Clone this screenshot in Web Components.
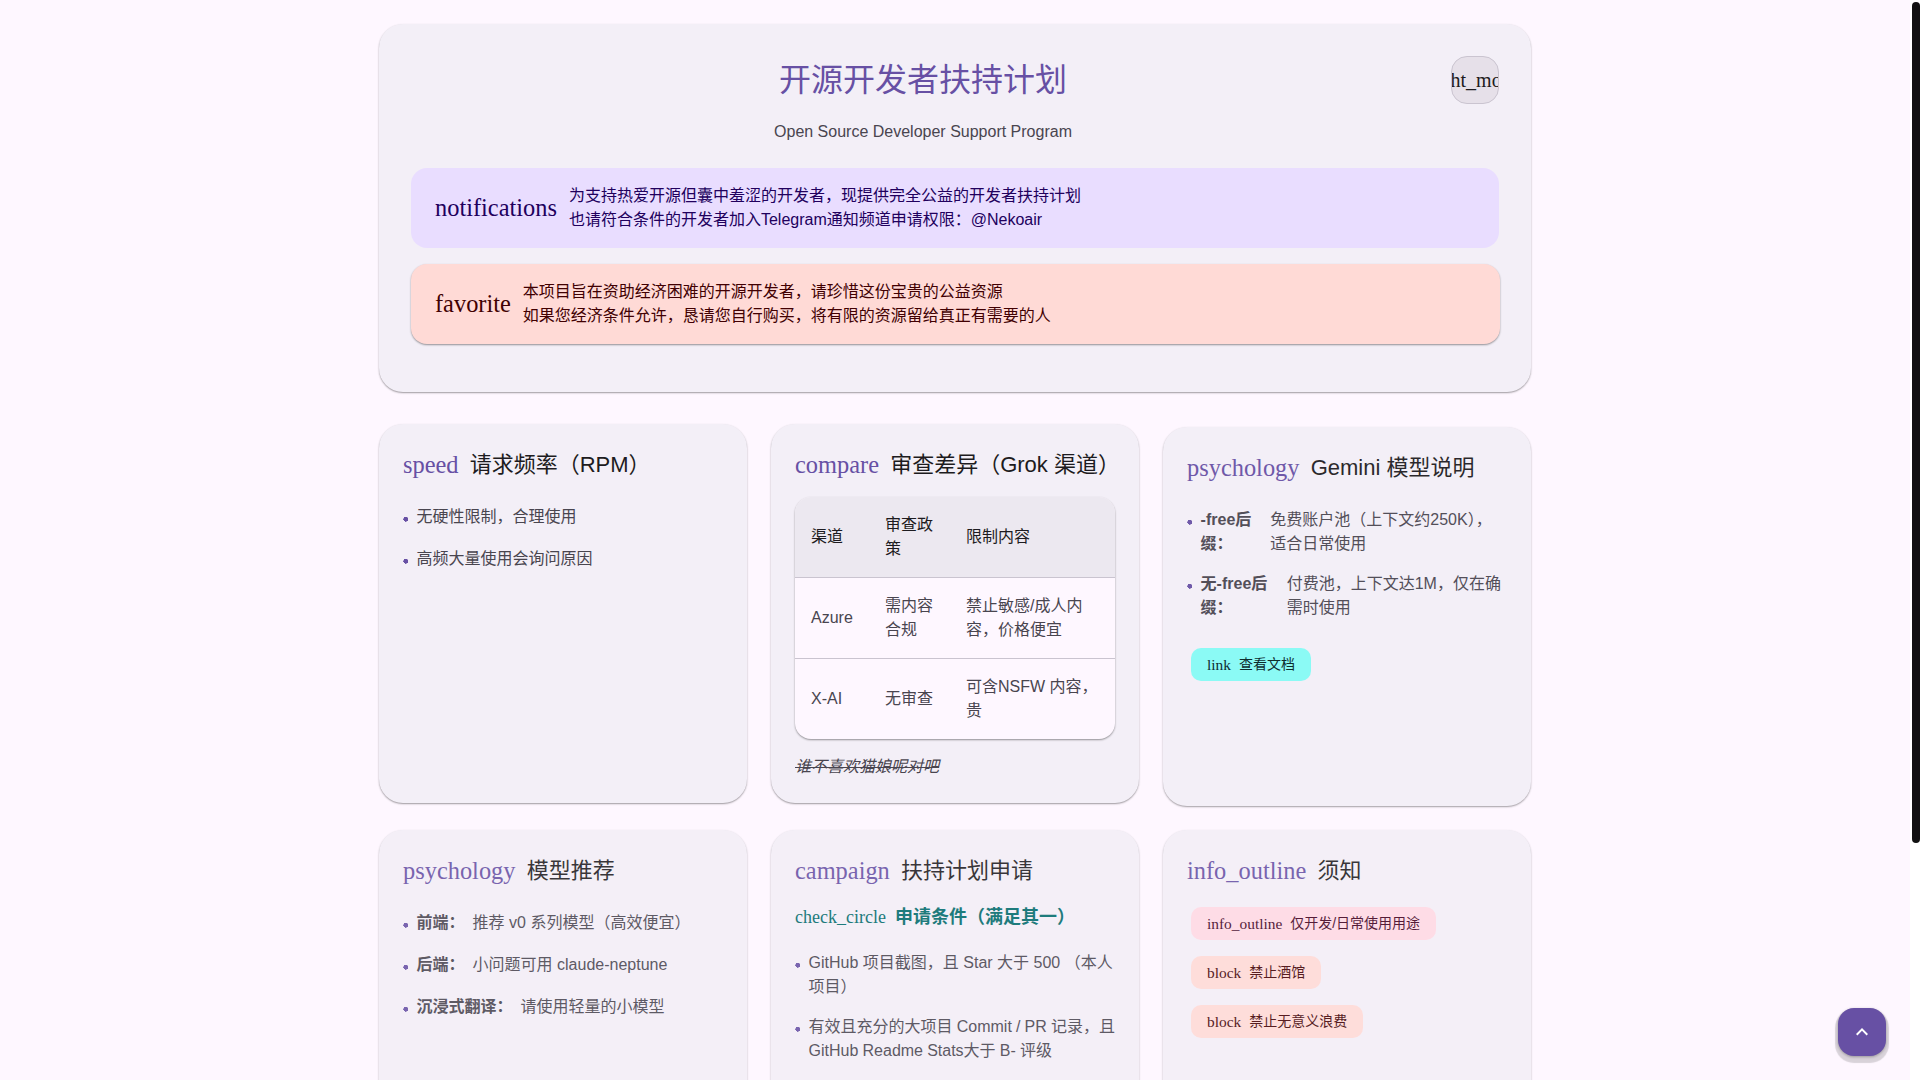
<!DOCTYPE html>
<html lang="zh-CN">
<head>
<meta charset="utf-8">
<title>开源开发者扶持计划</title>
<style>
html{background:#fff;scrollbar-width:none;}
body{margin:0;width:calc(100% - 10px);background:#fef7ff;font-family:"Liberation Sans","Noto Sans CJK SC",sans-serif;font-size:16px;line-height:24px;color:#1d1b20;}
</style>
</head>
<body>
<app-shell>
  <hero-card>
    <span slot="title">开源开发者扶持计划</span>
    <span slot="subtitle">Open Source Developer Support Program</span>
    <notice-banner icon="notifications" tone="info">
      <div>为支持热爱开源但囊中羞涩的开发者，现提供完全公益的开发者扶持计划</div>
      <div>也请符合条件的开发者加入Telegram通知频道申请权限：@Nekoair</div>
    </notice-banner>
    <notice-banner icon="favorite" tone="warm">
      <div>本项目旨在资助经济困难的开源开发者，请珍惜这份宝贵的公益资源</div>
      <div>如果您经济条件允许，恳请您自行购买，将有限的资源留给真正有需要的人</div>
    </notice-banner>
  </hero-card>

  <card-grid>
    <info-card icon="speed">
      <span slot="title">请求频率（RPM）</span>
      <bullet-list>
        <bullet-item><span>无硬性限制，合理使用</span></bullet-item>
        <bullet-item><span>高频大量使用会询问原因</span></bullet-item>
      </bullet-list>
    </info-card>
    <info-card icon="compare">
      <span slot="title">审查差异（Grok 渠道）</span>
      <compare-table></compare-table>
      <cat-note>谁不喜欢猫娘呢对吧</cat-note>
    </info-card>
    <info-card icon="psychology" fade="near">
      <span slot="title">Gemini 模型说明</span>
      <bullet-list>
        <bullet-item><strong>-free后缀：</strong><span>免费账户池（上下文约250K），适合日常使用</span></bullet-item>
        <bullet-item><strong>无-free后缀：</strong><span>付费池，上下文达1M，仅在确需时使用</span></bullet-item>
      </bullet-list>
      <chip-group style="margin-top:20px">
        <tone-chip icon="link" tone="cyan">查看文档</tone-chip>
      </chip-group>
    </info-card>

    <info-card icon="psychology" fade="far" tall>
      <span slot="title">模型推荐</span>
      <bullet-list>
        <bullet-item><strong>前端：</strong><span>推荐 v0 系列模型（高效便宜）</span></bullet-item>
        <bullet-item><strong>后端：</strong><span>小问题可用 claude-neptune</span></bullet-item>
        <bullet-item><strong>沉浸式翻译：</strong><span>请使用轻量的小模型</span></bullet-item>
      </bullet-list>
    </info-card>
    <info-card icon="campaign" fade="far" tall>
      <span slot="title">扶持计划申请</span>
      <sub-heading icon="check_circle">申请条件（满足其一）</sub-heading>
      <bullet-list tight>
        <bullet-item><span>GitHub 项目截图，且 Star 大于 500 （本人项目）</span></bullet-item>
        <bullet-item><span style="word-spacing:-.3px">有效且充分的大项目 Commit / PR 记录，且 GitHub Readme Stats大于 B- 评级</span></bullet-item>
      </bullet-list>
    </info-card>
    <info-card icon="info_outline" fade="far" tall>
      <span slot="title">须知</span>
      <chip-group style="margin-top:-4px">
        <tone-chip icon="info_outline" tone="pink">仅开发/日常使用用途</tone-chip>
        <tone-chip icon="block" tone="peach">禁止酒馆</tone-chip>
        <tone-chip icon="block" tone="peach">禁止无意义浪费</tone-chip>
      </chip-group>
    </info-card>
  </card-grid>
</app-shell>
<top-fab></top-fab>
<page-scrollbar></page-scrollbar>

<script>
const SANS='"Liberation Sans","Noto Sans CJK SC",sans-serif';
const ICON='"Liberation Serif",serif';
function def(name,html,init){
  customElements.define(name,class extends HTMLElement{
    constructor(){super();const r=this.attachShadow({mode:'open'});r.innerHTML=html;}
    connectedCallback(){if(init)init(this,this.shadowRoot);}
  });
}
def('app-shell',`<style>
:host{display:block;box-sizing:border-box;max-width:1200px;margin:0 auto;padding:24px;}
</style><slot></slot>`);

def('hero-card',`<style>
:host{display:block;background:#f3eff7;border-radius:24px;padding:32px;margin-bottom:32px;
box-shadow:0 1px 2px rgba(0,0,0,.3),0 1px 1px rgba(0,0,0,.1);}
.head{display:flex;gap:16px;align-items:flex-start;margin-bottom:24px;}
.t{flex:1;text-align:center;}
h1{margin:0;font:400 32px/48px ${SANS};color:#6750a4;}
p{margin:16px 0 0;font:400 16px/24px ${SANS};color:#49454f;}
button{flex:none;width:48px;height:48px;box-sizing:border-box;padding:0 0 1px;display:flex;align-items:center;justify-content:center;
overflow:hidden;border:1px solid #cac4d0;border-radius:16px;background:#e6e0e9;color:#1d1b20;font:400 20px/1 ${ICON};white-space:nowrap;}
</style><div class="head"><div class="t"><h1><slot name="title"></slot></h1><p><slot name="subtitle"></slot></p></div><button>light_mode</button></div><slot></slot>`);

def('notice-banner',`<style>
:host{display:flex;align-items:center;gap:12px;box-sizing:border-box;min-height:80px;padding:16px 24px;border-radius:16px;margin-bottom:16px;font:400 16px/24px ${SANS};}
:host([tone=info]){background:#e9ddff;color:#21005d;}
:host([tone=warm]){background:#ffdad6;color:#410002;margin-right:-1px;box-shadow:0 1px 2px rgba(0,0,0,.4);}
.i{font:400 24.4px/24px ${ICON};}
</style><span class="i"></span><div><slot></slot></div>`,(el,r)=>{r.querySelector('.i').textContent=el.getAttribute('icon');});

def('card-grid',`<style>
:host{display:grid;grid-template-columns:repeat(3,368px);column-gap:24px;row-gap:27px;}
</style><slot></slot>`);

def('info-card',`<style>
:host{display:block;box-sizing:border-box;background:#f3eff7;border-radius:24px;padding:24px;
box-shadow:0 1px 2px rgba(0,0,0,.3),0 1px 1px rgba(0,0,0,.1);}
:host([fade=near]){opacity:.94;transform:translateY(3px);}
:host([fade=far]){opacity:.88;}
:host([tall]){min-height:533px;}
h3{margin:0 0 16px;display:flex;align-items:center;gap:11.2px;font:400 22px/33px ${SANS};color:#1d1b20;white-space:nowrap;}
.i{font:400 24.4px/33px ${ICON};color:#6750a4;}
</style><h3><span class="i"></span><slot name="title"></slot></h3><slot></slot>`,(el,r)=>{r.querySelector('.i').textContent=el.getAttribute('icon');});

def('bullet-list',`<style>
:host{display:block;padding-top:8px;}
:host([tight]){padding-top:0;}
</style><slot></slot>`);

def('bullet-item',`<style>
:host{display:flex;gap:8px;margin-bottom:16px;font:400 16px/24px ${SANS};color:#49454f;}
.b{flex:none;width:5.6px;height:26px;background:radial-gradient(circle 2.5px at 2.8px 14.2px,#6750a4 92%,transparent);}
::slotted(strong){font-weight:700;}
</style><span class="b"></span><slot></slot>`);

def('compare-table',`<style>
:host{display:block;border-radius:16px;overflow:hidden;background:#fef7ff;box-shadow:0 1px 2px rgba(0,0,0,.4);}
table{width:100%;border-collapse:collapse;table-layout:fixed;font:400 16px/24px ${SANS};color:#49454f;}
th,td{padding:16px;text-align:left;vertical-align:middle;}
th{font-weight:400;color:#1d1b20;background:#ece8f0;}
tr{border-bottom:1px solid #cac4d0;}
tbody tr:last-child{border-bottom:0;}
</style><table><colgroup><col style="width:74px"><col style="width:81px"><col></colgroup>
<thead><tr><th>渠道</th><th>审查政策</th><th>限制内容</th></tr></thead>
<tbody>
<tr><td>Azure</td><td>需内容合规</td><td>禁止敏感/成人内容，价格便宜</td></tr>
<tr><td>X-AI</td><td>无审查</td><td>可含NSFW 内容，贵</td></tr>
</tbody></table>`);

def('cat-note',`<style>
:host{display:block;margin:16px 0 0;font:italic 400 16px/24px ${SANS};color:#49454f;text-decoration:line-through;}
</style><slot></slot>`);

def('chip-group',`<style>:host{display:flex;flex-direction:column;align-items:flex-start;}</style><slot></slot>`);

def('tone-chip',`<style>
:host{display:flex;align-items:center;gap:8px;box-sizing:border-box;height:33px;padding:0 16px;margin:8px 4px;border-radius:10px;font:400 14px/21px ${SANS};}
:host([tone=cyan]){background:#84fbf5;color:#00201f;}
:host([tone=pink]){background:#ffd9e3;color:#3e001d;}
:host([tone=peach]){background:#ffdad6;color:#410002;}
.i{font:400 15.4px/21px ${ICON};}
</style><span class="i"></span><slot></slot>`,(el,r)=>{r.querySelector('.i').textContent=el.getAttribute('icon');});

def('sub-heading',`<style>
:host{display:flex;align-items:center;gap:9px;padding-top:1px;margin:0 0 20px;font:700 18px/27px ${SANS};color:#006a6a;}
.i{font:400 18px/27px ${ICON};}
</style><span class="i"></span><slot></slot>`,(el,r)=>{r.querySelector('.i').textContent=el.getAttribute('icon');});

def('top-fab',`<style>
:host{position:fixed;right:34px;bottom:24px;width:48px;height:48px;display:flex;align-items:center;justify-content:center;border-radius:16px;background:#6750a4;
box-shadow:0 4px 1px 3px rgba(0,0,0,.15),0 1px 3px rgba(0,0,0,.3);}
svg{width:24px;height:24px;fill:#fff;display:block;}
</style><svg viewBox="0 0 24 24"><path d="M7.41 15.41 12 10.83l4.59 4.58L18 14l-6-6-6 6z"/></svg>`);

def('page-scrollbar',`<style>
:host{position:fixed;top:2px;right:0;width:8px;height:841px;background:#111;border-radius:4px;}
</style>`);
</script>
</body>
</html>
